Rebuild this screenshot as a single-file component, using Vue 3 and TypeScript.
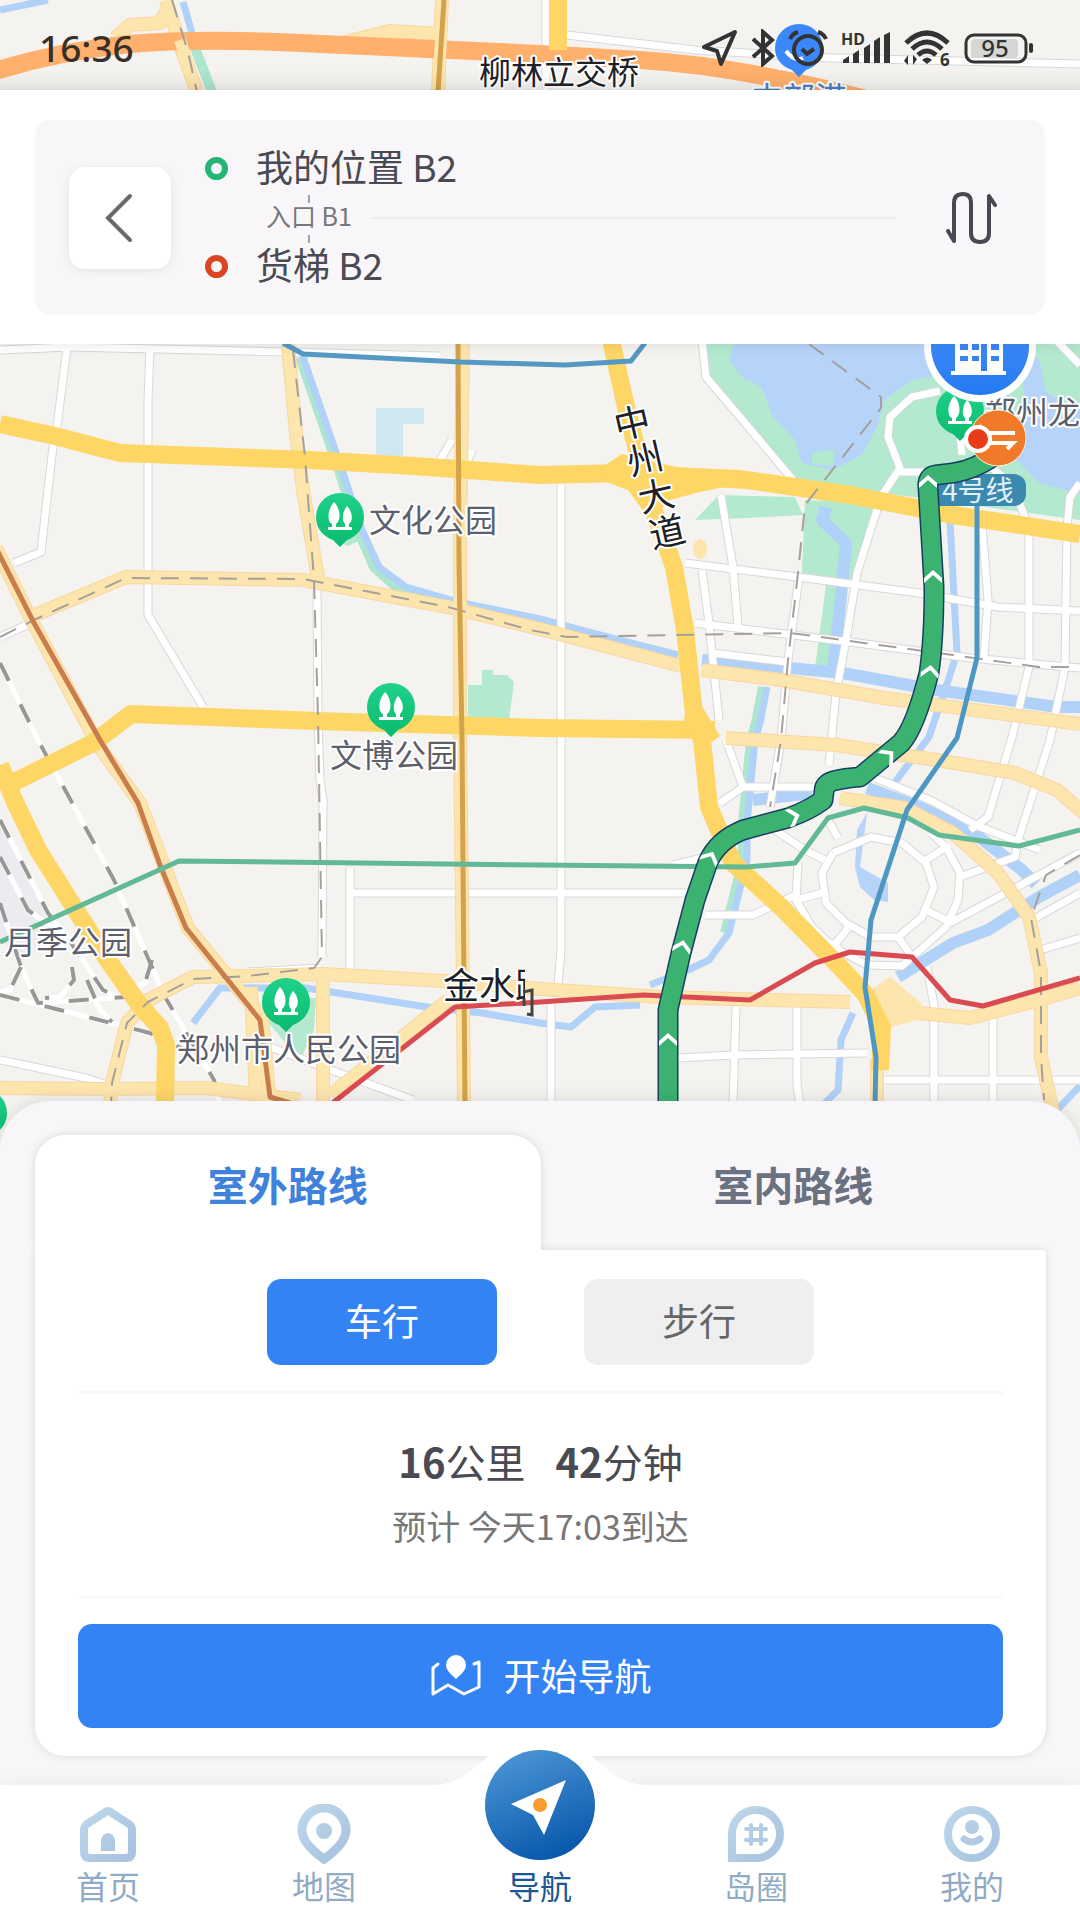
<script setup lang="ts">
import { ref } from 'vue'

type RouteKind = 'outdoor' | 'indoor'
type TravelMode = 'drive' | 'walk'

const routeKind = ref<RouteKind>('outdoor')
const travelMode = ref<TravelMode>('drive')

const routeKinds: { id: RouteKind; label: string }[] = [
  { id: 'outdoor', label: '室外路线' },
  { id: 'indoor', label: '室内路线' },
]
const travelModes: { id: TravelMode; label: string }[] = [
  { id: 'drive', label: '车行' },
  { id: 'walk', label: '步行' },
]

// Map geometry, in map units
const greenAreas: string[] = [
  '702,340 1080,340 1080,520 790,480 708,378',
  '805,500 802,573 853,580 867,527 874,503',
  '826,585 815,668 836,668 846,585',
  '695,520 719,495 795,497 803,515 747,518',
  '468,685 482,685 482,670 493,670 493,675 507,675 514,682 509,720 468,718',
  '262,995 316,998 314,1030 302,1056 286,1044 268,1022',
  '365,538 348,546 335,540 350,500',
]
const waterAreas: string[] = [
  '735,340 729,360 747,383 767,410 795,440 802,463 833,470 862,455 878,425 885,400 912,380 940,375 940,340',
  '1022,340 1040,362 1046,392 1080,410 1080,494 1039,483 1012,455 1024,400',
  '867,813 860,867 888,883 888,902 874,900 860,887 855,867 857,830',
]
const lakeGreens: string[] = [
  '812,452 835,450 833,466 812,464',
  '745,378 762,388 774,420 754,404',
]
const riverBanks: string[] = [
  '300,357 338,467 358,530 374,567 402,592 458,608 540,625 592,638 640,648',
  '195,48 212,92',
  '763,687 756,723 751,740 743,823 743,860 725,933',
]
const rivers: string[] = [
  '0,10 48,0',
  '183,2 192,33',
  '303,357 341,467 362,530 379,567 406,587 458,602 540,619 592,633 678,655',
  '767,687 760,723 755,740 747,823 747,860 729,933 709,960 688,970 650,985',
  '853,1013 841,1040 838,1090 825,1103',
  '193,1023 220,988 306,988 427,1007 482,1013 540,1023 571,1027 595,1007 640,1005',
  '950,520 957,653 946,687 929,737 895,782',
  '1080,1086 1055,1112',
]
const wideRivers: string[] = [
  '826,507 822,520 846,543 840,607 833,668',
  '702,660 843,673 936,690 1057,707 1080,707',
  '753,800 812,793',
  '867,788 919,807 970,830 1022,870 1036,884',
  '1080,875 1039,897 988,930 953,943 898,977',
]
const streets: string[] = [
  '0,350 69,347 286,352 440,356',
  '67,347 57,427 53,447 46,507 41,552 14,563',
  '150,348 148,400 148,615 203,707',
  '317,590 318,717 320,780 323,800 322,957',
  '561,485 561,950 558,985',
  '551,1005 551,1105',
  '350,868 350,972',
  '350,893 690,893',
  '0,637 27,625',
  '567,35 695,50 832,58 1080,64',
  '546,0 546,100',
  '702,340 706,377 740,417 793,480',
  '940,391 912,397 890,417 888,437 900,468 881,497 857,573 846,640 836,693 829,765',
  '900,472 925,472',
  '721,495 733,567 738,627',
  '685,563 798,577 919,593 998,607 1080,611',
  '695,623 850,642 970,658 1080,668',
  '702,570 709,623 719,720',
  '799,577 788,660 781,740 770,807',
  '712,653 788,662',
  '1029,527 1029,667 1012,737 988,817 970,830',
  '1080,483 1070,497 1067,527 1065,667 1050,740 1019,837 1015,857 960,877',
  '981,513 988,600 984,657',
  '985,462 1012,485 1027,522',
  '1056,340 1080,365',
  '957,405 962,455',
  '833,853 871,837 902,843 926,863 934,887 922,917 898,937 871,937 846,923 826,903 822,873 833,853',
  '760,820 805,850 825,860',
  '798,863 796,900 812,927 833,947 867,965 902,966 946,927 958,900 960,873 946,847 930,832',
  '796,900 822,893',
  '922,908 950,922',
  '833,947 848,928',
  '898,937 912,957',
  '926,860 950,845',
  '828,820 838,838',
  '950,923 1080,853',
  '726,740 743,787 815,787',
  '743,787 720,803',
  '673,865 715,855',
  '705,915 753,915 796,895',
  '780,910 840,950',
  '875,778 930,800 978,826 1040,850',
  '1032,920 1080,893',
  '1040,950 1080,938',
  '736,1007 733,1105',
  '797,1007 797,1085 800,1105',
  '678,1058 733,1055 867,1053',
  '884,1080 1080,1080',
  '927,967 934,1005 934,1105',
  '993,1015 993,1105',
  '0,1060 86,1078 130,1092',
  '265,1045 320,1066 413,1100',
  '248,972 320,968',
  '452,440 440,460',
  '472,450 462,475',
]
const secondaryRoads: string[] = [
  '288,345 296,433 303,490 318,578',
  '30,617 126,577 303,580 448,607 540,629 609,647 681,666',
  '702,670 781,680 884,698 1080,724',
  '463,340 460,540 460,740 462,900 464,1105',
  '-4,548 34,625 98,745 140,803 188,928 262,1018 270,1105',
  '166,0 180,45 197,92',
  '115,38 130,25 160,23 170,5',
  '345,42 390,31 440,34',
  '442,0 438,92',
  '110,1105 112,1083 127,1023 148,1000 193,977 248,976 323,974 444,981 540,989 660,997 850,1002',
  '0,1088 110,1089 207,1088 300,1100',
  '323,972 323,1105',
  '251,987 256,1100',
  '448,1000 331,1095',
  '840,798 905,808 953,833 998,873 1029,917 1041,973 1041,1057 1053,1112',
  '726,738 836,745 936,760 1015,773 1057,790 1085,814',
  '884,1008 919,1013 970,1018 1039,1000 1080,988',
  '877,1060 877,1105',
]
const mainRoads: string[] = [
  '0,424 55,436 120,453 310,460 413,466 540,475 623,473 747,480 850,495 953,515 1080,534',
  '0,789 93,743 131,714 317,721 540,728 715,730',
  '0,765 14,800 38,850 103,953 138,1003 160,1028 166,1045 165,1105',
  '611,340 626,407 650,500 674,567 685,630 695,723 702,740 709,807 733,863 781,907 840,967 866,995 882,1028 880,1070',
  '558,0 558,50',
]
const dashedBorders: string[] = [
  '172,0 188,52 197,92',
  '293,350 305,457 314,580 318,717 322,957 314,968 248,976 193,979 148,1002 127,1023 112,1083 111,1105',
  '0,637 34,620 126,578 303,579 448,607 530,630 567,637 791,633 953,655 1039,667 1080,667',
  '809,344 881,397 881,408 805,505 798,573 788,660 781,740 770,807',
  '1080,855 1046,875 1031,918 1041,973 1041,1057 1044,1100',
]
const railways: string[] = [
  '0,663 38,740 114,880 165,997 214,1080 220,1105',
  '0,820 48,913 69,940 103,990 120,998',
  '0,857 28,910 56,930',
  '0,903 21,967 38,1003 127,997',
  '0,995 72,1013 150,1033 185,1050',
  '152,960 145,983 130,990',
  '72,967 74,980 60,997 45,998',
  '21,967 10,990 0,992',
  '87,980 100,1010 112,1022',
]

interface MetroLine {
  color: string
  points: string
}
const metroLines: MetroLine[] = [
  { color: '#d5a24c', points: '444,0 438,92' },
  { color: '#d5a24c', points: '458,340 459,560 462,740 465,1105' },
  { color: '#c97d4c', points: '-4,548 34,623 100,740 138,803 160,865 186,928 260,1020 270,1097 290,1103' },
  { color: '#5499c4', points: '283,343 303,354 460,362 565,365 631,361 645,343' },
  { color: '#61b995', points: '0,942 179,861 540,865 747,867 795,863 828,818 864,808 908,818 939,835 1019,846 1080,830' },
  { color: '#d94b50', points: '330,1105 455,1007 540,1002 643,995 750,1000 815,963 850,952 912,957 950,1000 983,1006 1080,978' },
  { color: '#4d97c2', points: '977,500 977,658 957,738 907,810 871,920 865,987 876,1057 875,1105' },
]

const routePath =
  'M1000 452 Q975 470 953 473 L936 475 Q927 476 928 487 L934 587 Q934 640 929 673 Q915 728 901 743 L860 777 Q845 778 833 781 Q824 784 824 792 L823 800 Q810 810 788 818 L743 830 Q718 840 708 862 L695 900 L681 953 L668 1010 L668 1110'

const chevrons: { x: number; y: number; angle: number }[] = [
  { x: 928, y: 482, angle: 0 },
  { x: 933, y: 577, angle: 0 },
  { x: 930, y: 672, angle: 6 },
  { x: 888, y: 756, angle: 50 },
  { x: 793, y: 817, angle: 72 },
  { x: 710, y: 858, angle: 26 },
  { x: 682, y: 947, angle: 12 },
  { x: 668, y: 1040, angle: 0 },
]

const parkPins: { x: number; y: number }[] = [
  { x: 340, y: 517 },
  { x: 391, y: 707 },
  { x: 286, y: 1002 },
  { x: 960, y: 411 },
  { x: -17, y: 1113 },
]
const parkLabels: { text: string; x: number; y: number }[] = [
  { text: '文化公园', x: 369, y: 532 },
  { text: '文博公园', x: 330, y: 767 },
  { text: '月季公园', x: 4, y: 954 },
  { text: '郑州市人民公园', x: 177, y: 1061 },
  { text: '郑州龙', x: 984, y: 424 },
]
const avenueLabel: { char: string; x: number; y: number }[] = [
  { char: '中', x: 632, y: 423 },
  { char: '州', x: 645, y: 459 },
  { char: '大', x: 656, y: 496 },
  { char: '道', x: 667, y: 532 },
]
</script>

<template>
  <div class="screen">
    <svg class="map" viewBox="0 0 1080 1180" preserveAspectRatio="xMidYMin slice" aria-label="路线地图">
      <defs>
        <clipPath id="road-name-edge"><rect x="440" y="960" width="85" height="60" /></clipPath>
        <linearGradient id="pin-green" x1="0" y1="0" x2="0" y2="1">
          <stop offset="0" stop-color="#1fd18a" />
          <stop offset="1" stop-color="#0abb6e" />
        </linearGradient>
        <linearGradient id="building-blue" x1="0" y1="0" x2="0" y2="1">
          <stop offset="0" stop-color="#4f96fb" />
          <stop offset="1" stop-color="#2479f2" />
        </linearGradient>
      </defs>

      <rect class="land" width="1080" height="1180" />
      <polygon class="station" points="0,820 60,940 20,960 0,940" />
      <polygon v-for="p in greenAreas" :key="p" class="green" :points="p" />
      <polygon v-for="p in waterAreas" :key="p" class="water" :points="p" />
      <polygon v-for="p in lakeGreens" :key="p" class="green" :points="p" />
      <polygon class="campus" points="376,408 424,408 424,424 403,424 403,456 376,456" />
      <polyline v-for="p in riverBanks" :key="p" class="bank" :points="p" />
      <polyline v-for="p in rivers" :key="p" class="river" :points="p" />
      <polyline v-for="p in wideRivers" :key="p" class="river wide" :points="p" />

      <polyline v-for="p in streets" :key="'c' + p" class="street-case" :points="p" />
      <polyline v-for="p in streets" :key="p" class="street" :points="p" />
      <polyline v-for="p in railways" :key="'c' + p" class="rail-case" :points="p" />
      <polyline v-for="p in railways" :key="p" class="rail" :points="p" />
      <polyline v-for="p in secondaryRoads" :key="'c' + p" class="secondary-case" :points="p" />
      <polyline v-for="p in secondaryRoads" :key="p" class="secondary" :points="p" />
      <polygon class="junction" points="868,992 890,977 922,1004 918,1020 888,1028" />
      <ellipse class="junction" cx="700" cy="549" rx="7" ry="10" />
      <path class="motorway" d="M-5 71 Q60 51 130 44 Q200 38 300 43 L540 54 L640 60 Q740 66 870 100" />
      <polyline v-for="p in mainRoads" :key="p" class="main-road" :points="p" />
      <polygon class="main-fill" points="604,466 622,454 680,468 740,470 748,482 700,492 670,500 650,520 628,490 606,482" />
      <polygon class="main-fill" points="684,718 692,690 720,736 712,742 690,738" />
      <polyline class="secondary" points="442,22 438,92" />
      <polyline class="secondary" points="180,40 188,65" />
      <polyline v-for="p in dashedBorders" :key="p" class="border" :points="p" />
      <polyline v-for="m in metroLines" :key="m.points" class="metro" :points="m.points" :stroke="m.color" />

      <g v-for="pin in parkPins" :key="pin.x" :transform="`translate(${pin.x} ${pin.y})`">
        <path d="M-24 0 A24 24 0 1 1 24 0 C24 13 15 20 7 23 L0 30 L-7 23 C-15 20 -24 13 -24 0 Z" fill="url(#pin-green)" />
        <path
          d="M-6 -15 C-13 -7 -13 5 -8 7 V10 H-12 V13 H12 V10 H9 V7 C14 3 12 -6 7 -11 C3 -6 1 3 5 7 V10 H-4 V7 C1 4 1 -8 -6 -15 Z"
          fill="#fff"
        />
      </g>

      <g class="park-label">
        <text v-for="l in parkLabels" :key="l.text" :x="l.x" :y="l.y">{{ l.text }}</text>
      </g>
      <g class="avenue-label">
        <text
          v-for="c in avenueLabel"
          :key="c.char"
          :transform="`translate(${c.x} ${c.y}) rotate(-13)`"
          y="13"
          text-anchor="middle"
        >{{ c.char }}</text>
        <text x="443" y="999" clip-path="url(#road-name-edge)">金水路</text>
      </g>
      <path d="M523 992 L532 990 V1015 L527 1014 M524 998 V1006" fill="none" stroke="#444" stroke-width="3" />
      <text class="bridge-label" x="479" y="84">柳林立交桥</text>

      <g transform="translate(799 48)">
        <path d="M-24 0 A24 24 0 1 1 24 0 C24 13 15 19 7 22 L0 29 L-7 22 C-15 19 -24 13 -24 0 Z" fill="#3c87fa" />
        <path d="M-13 3 Q-5 14 4 10" fill="none" stroke="#fff" stroke-width="4" />
      </g>
      <text class="district-label" x="799" y="110" text-anchor="middle">中部港</text>

      <g>
        <rect x="925" y="474" width="101" height="32" rx="12" fill="#3a89af" />
        <text class="line-label" x="942" y="501">4号线</text>
      </g>

      <path class="route-case" :d="routePath" />
      <path class="route" :d="routePath" />
      <path
        v-for="c in chevrons"
        :key="c.y"
        :transform="`translate(${c.x} ${c.y}) rotate(${c.angle})`"
        d="M-9 1 L0 -7 L9 1 V6 L0 -2 L-9 6 Z"
        fill="#fff"
      />

      <circle cx="980" cy="346" r="56" fill="#fff" />
      <circle cx="980" cy="346" r="49" fill="url(#building-blue)" />
      <path
        d="M955 330 H981 V371 H987 V330 H1003 V371 H1006 V375 H951 V371 H955 Z M960 344 V350 H968 V344 Z M972 344 V350 H979 V344 Z M960 356 V361 H968 V356 Z M972 356 V361 H979 V356 Z M991 344 V350 H999 V344 Z M991 356 V361 H999 V356 Z"
        fill="#fff"
        fill-rule="evenodd"
      />
      <circle cx="998" cy="438" r="28" fill="#f07a29" stroke="#fff5e8" stroke-width="1" />
      <path d="M984 433 H1015 M984 443 H1013 L1007 449" fill="none" stroke="#fff" stroke-width="4" />
      <path d="M965 436 L981 424 L983 431 Z" fill="#fff" />
      <circle cx="978" cy="439" r="14" fill="#fff" />
      <circle cx="978" cy="439" r="10" fill="#e83b17" />
    </svg>

    <div class="status">
      <time>16:36</time>
      <div class="status-icons">
        <svg width="36" height="38" viewBox="0 0 36 38">
          <path d="M33 3 L19 35 L15 22 L2 18 Z" class="line" stroke-width="4" stroke-linejoin="round" />
        </svg>
        <svg width="24" height="38" viewBox="0 0 24 38">
          <path d="M2 10 L21 27 L12 35 V3 L21 11 L2 28" class="line" stroke-width="4" />
        </svg>
        <svg width="40" height="38" viewBox="0 0 40 38">
          <circle cx="20" cy="21" r="14" class="line" stroke-width="4" />
          <path d="M14 20 L19 25 L26 20 M2 10 Q4 5 10 3 M30 3 Q36 5 38 10" class="line" stroke-width="4" />
        </svg>
        <svg width="50" height="38" viewBox="0 0 50 38">
          <text x="0" y="16" class="hd">HD</text>
          <path d="M2 34 V31 L8 27 V34 Z M12 25 L18 21 V34 H12 Z M23 19 L29 15 V34 H23 Z M33 12 L39 8 V34 H33 Z M43 6 L49 3 V34 H43 Z" />
        </svg>
        <svg width="47" height="38" viewBox="0 0 47 38">
          <path d="M2 14 Q23 -6 44 14 M8 20 Q23 6 38 20 M14 26 Q23 18 32 26" class="line" stroke-width="5" />
          <path d="M18 31 Q23 26 28 31 L23 35 Z M4 26 V36 L0 32 M9 36 V26 L13 30" />
          <text x="36" y="37" class="wifi-gen">6</text>
        </svg>
        <svg width="70" height="38" viewBox="0 0 70 38">
          <rect x="2" y="6" width="60" height="27" rx="8" class="line" stroke-width="3" />
          <rect x="7" y="10" width="47" height="19" rx="4" class="charge" />
          <rect x="65" y="14" width="4" height="10" rx="2" />
          <text x="31" y="28" text-anchor="middle" class="percent">95</text>
        </svg>
      </div>
    </div>

    <header class="header">
      <div class="trip">
        <button class="back" type="button" aria-label="返回">
          <svg width="30" height="50" viewBox="0 0 30 50">
            <path d="M25 3 L3 25 L25 47" fill="none" stroke="#696969" stroke-width="4" stroke-linecap="round" />
          </svg>
        </button>
        <div class="stops">
          <div class="stop"><i class="ring from"></i><span>我的位置 B2</span></div>
          <div class="via"><span>入口 B1</span><i class="rule"></i></div>
          <div class="stop"><i class="ring to"></i><span>货梯 B2</span></div>
        </div>
        <button class="swap" type="button" aria-label="交换起点和终点">
          <svg width="54" height="56" viewBox="0 0 54 56">
            <path
              d="M4 41 L10 51 V13 Q10 4 19 4 Q27 4 27 13 V43 Q27 52 36 52 Q45 52 45 43 V6 L51 15"
              fill="none"
              stroke="#484852"
              stroke-width="4"
              stroke-linecap="round"
              stroke-linejoin="round"
            />
          </svg>
        </button>
      </div>
    </header>

    <div class="map-window"></div>

    <main class="sheet">
      <div class="tabs" role="tablist">
        <button
          v-for="k in routeKinds"
          :key="k.id"
          class="tab"
          :class="{ active: routeKind === k.id }"
          type="button"
          role="tab"
          :aria-selected="routeKind === k.id"
          @click="routeKind = k.id"
        >{{ k.label }}</button>
      </div>
      <section class="card">
        <div class="modes">
          <button
            v-for="m in travelModes"
            :key="m.id"
            class="mode"
            :class="{ active: travelMode === m.id }"
            type="button"
            @click="travelMode = m.id"
          >{{ m.label }}</button>
        </div>
        <div class="summary">
          <p class="total"><span><b>16</b>公里</span><span><b>42</b>分钟</span></p>
          <p class="eta">预计 今天17:03到达</p>
        </div>
        <button class="start" type="button">
          <svg width="52" height="44" viewBox="0 0 52 44">
            <path
              d="M8 10 L3 14 V40 L18 31 L34 40 L49 33 V8 L44 10"
              fill="none"
              stroke="#fff"
              stroke-width="3"
              stroke-linecap="round"
              stroke-linejoin="round"
            />
            <path d="M26 25 C19 19 16 15 16 11 A10 10 0 0 1 36 11 C36 15 33 19 26 25 Z" fill="#fff" />
          </svg>
          <span>开始导航</span>
        </button>
      </section>
    </main>

    <nav class="tabbar">
      <svg class="bump" width="220" height="48" viewBox="0 0 220 48">
        <path d="M0 48 V46 C30 46 42 31 57 18 C72 5 90 0 110 0 C130 0 148 5 163 18 C178 31 190 46 220 46 V48 Z" fill="#fff" />
      </svg>
      <a href="#home">
        <svg class="icon" width="60" height="60" viewBox="0 0 60 60">
          <defs>
            <linearGradient id="soft" x1="0" y1="0" x2="60" y2="60" gradientUnits="userSpaceOnUse">
              <stop offset="0" stop-color="#bfdaeb" />
              <stop offset="1" stop-color="#a5bfdf" />
            </linearGradient>
          </defs>
          <path d="M30 7 Q32 7 34 9 L51 20 Q54 22 54 26 V48 Q54 54 48 54 H12 Q6 54 6 48 V26 Q6 22 9 20 L26 9 Q28 7 30 7 Z" fill="none" stroke="url(#soft)" stroke-width="8" />
          <path d="M23 47 V36 Q25 29 30 29 Q35 29 37 36 V47 Z" fill="url(#soft)" />
        </svg>
        <span>首页</span>
      </a>
      <a href="#map">
        <svg class="icon" width="60" height="60" viewBox="0 0 60 60">
          <path d="M30 55 C20 48 8 37 8 26 A22 22 0 0 1 52 26 C52 37 40 48 30 55 Z" fill="none" stroke="url(#soft)" stroke-width="9" />
          <circle cx="30" cy="27" r="8" fill="url(#soft)" />
        </svg>
        <span>地图</span>
      </a>
      <a href="#navigate" class="current" aria-current="page">
        <svg class="compass" width="110" height="110" viewBox="0 0 110 110">
          <defs>
            <linearGradient id="deep" x1="0.3" y1="0" x2="0.7" y2="1">
              <stop offset="0" stop-color="#4a94d4" />
              <stop offset="1" stop-color="#0655aa" />
            </linearGradient>
          </defs>
          <circle cx="55" cy="55" r="55" fill="url(#deep)" />
          <path d="M81 30 L59 85 L48 65 L26 54 Z" fill="#fff" />
          <circle cx="55" cy="55" r="7" fill="#f99c2d" />
        </svg>
        <span>导航</span>
      </a>
      <a href="#circle">
        <svg class="icon" width="60" height="60" viewBox="0 0 60 60">
          <path d="M6 54 V30 A24 24 0 1 1 30 54 Z" fill="none" stroke="url(#soft)" stroke-width="8" />
          <path d="M25 21 V40 M35 21 V40 M20 25 H40 M20 36 H40" fill="none" stroke="url(#soft)" stroke-width="4" stroke-linecap="round" />
        </svg>
        <span>岛圈</span>
      </a>
      <a href="#me">
        <svg class="icon" width="60" height="60" viewBox="0 0 60 60">
          <circle cx="30" cy="30" r="24" fill="none" stroke="url(#soft)" stroke-width="8" />
          <circle cx="30" cy="23" r="7" fill="url(#soft)" />
          <path d="M22 35 Q30 41 38 35" fill="none" stroke="url(#soft)" stroke-width="7" stroke-linecap="round" />
        </svg>
        <span>我的</span>
      </a>
    </nav>
  </div>
</template>

<style>
body {
  background: #f8f6f8;
}
</style>

<style scoped>
.screen {
  position: relative;
  display: flex;
  flex-direction: column;
  min-height: 100vh;
  overflow: hidden;
  font-family: 'Noto Sans CJK SC', 'Noto Sans', sans-serif;
  color: #4a4a52;
}

button {
  margin: 0;
  padding: 0;
  border: 0;
  background: none;
  font: inherit;
  color: inherit;
  cursor: pointer;
}

p {
  margin: 0;
}

svg {
  display: block;
  flex: none;
}

/* Map */
.map {
  position: absolute;
  top: 0;
  left: 0;
  width: 100%;
  height: calc(100% - 740px);
}
.map polyline,
.map .motorway,
.map .route,
.map .route-case {
  fill: none;
  stroke-linejoin: round;
}
.land { fill: #f4f3f0; }
.station { fill: #ecebf0; }
.green { fill: #b2e9cf; }
.water { fill: #b6d3f9; }
.campus { fill: #d0e7f1; }
.bank { stroke: #aee5cf; stroke-width: 10; }
.river { stroke: #b0d1f8; stroke-width: 7; }
.river.wide { stroke-width: 12; }
.street-case { stroke: #d9d7db; stroke-width: 9; }
.street { stroke: #fff; stroke-width: 7; }
.rail-case { stroke: #fff; stroke-width: 5; }
.rail { stroke: #979795; stroke-width: 4; stroke-dasharray: 20 26; }
.secondary-case { stroke: #fbd6a0; stroke-width: 14; }
.secondary { stroke: #fde5ae; stroke-width: 12; }
.junction { fill: #fde5ae; }
.motorway { stroke: #ffb06c; stroke-width: 18; }
.main-road { stroke: #fdd666; stroke-width: 18; }
.main-fill { fill: #fdd666; }
.border { stroke: #a5a09c; stroke-width: 2; stroke-dasharray: 18 11; }
.metro { stroke-width: 5; }
.route-case { stroke: #173f63; stroke-width: 21; }
.route { stroke: #3cb271; stroke-width: 18; }
.map text {
  paint-order: stroke;
  stroke: #fff;
  stroke-width: 4px;
  stroke-linejoin: round;
}
.park-label { font-size: 32px; fill: #5c606d; }
.avenue-label { font-size: 36px; fill: #202027; }
.bridge-label { font-size: 32px; fill: #202027; }
.district-label { font-size: 32px; fill: #4f7fc4; }
.map .line-label { font-size: 28px; fill: #e2f1f8; stroke: none; }

/* Status bar */
.status {
  position: relative;
  display: flex;
  align-items: center;
  justify-content: space-between;
  box-sizing: border-box;
  height: 90px;
  padding: 5px 46px 0 39px;
  background: linear-gradient(rgba(0, 0, 0, 0) 70px, rgba(0, 0, 0, 0.06));
}
.status time {
  font-family: 'Noto Sans', sans-serif;
  font-size: 37px;
  font-weight: 500;
  color: #37302a;
}
.status-icons {
  display: flex;
  align-items: center;
  gap: 13px;
  fill: #333;
}
.line { fill: none; stroke: #333; }
.charge { fill: #d6d6d6; }
.hd { font: bold 16px 'Noto Sans', sans-serif; }
.wifi-gen { font: bold 17px 'Noto Sans', sans-serif; }
.percent { font: 500 24px 'Noto Sans', sans-serif; }

/* Trip header */
.header {
  position: relative;
  padding: 30px 35px 29px;
  background: #fff;
  box-shadow: 0 2px 12px rgba(0, 0, 0, 0.08);
}
.trip {
  display: flex;
  align-items: center;
  box-sizing: border-box;
  height: 195px;
  padding: 0 47px 0 34px;
  border-radius: 16px;
  background: #f8f6f8;
}
.back {
  display: grid;
  place-items: center;
  flex: none;
  width: 102px;
  height: 102px;
  border-radius: 16px;
  background: #fff;
  box-shadow: 0 2px 12px rgba(0, 0, 0, 0.08);
}
.stops {
  flex: 1;
  padding-left: 34px;
}
.stop {
  display: flex;
  align-items: center;
  gap: 28px;
  height: 54px;
  font-size: 37px;
  line-height: 54px;
}
.stop span {
  padding-bottom: 6px;
}
.ring {
  box-sizing: border-box;
  width: 23px;
  height: 23px;
  border: 6px solid #22b573;
  border-radius: 50%;
}
.ring.to {
  border-color: #dc4522;
}
.via {
  display: flex;
  align-items: center;
  gap: 20px;
  height: 44px;
  padding-left: 61px;
  font-size: 25px;
  line-height: 44px;
  color: #77777b;
}
.via span {
  position: relative;
  padding-bottom: 6px;
}
.via span::before,
.via span::after {
  content: '';
  position: absolute;
  left: 42px;
  width: 2px;
  height: 8px;
  background: #a2a2a6;
}
.via span::before { top: 2px; }
.via span::after { bottom: 0; }
.rule {
  flex: 1;
  height: 2px;
  margin-right: 48px;
  background: #eeecee;
}
.swap {
  flex: none;
}

.map-window {
  flex: 1 0 400px;
}

/* Bottom sheet */
.sheet {
  position: relative;
  padding: 34px 34px 29px 35px;
  border-radius: 50px 50px 0 0;
  background: #f8f6f8;
  box-shadow: 0 -2px 16px rgba(0, 0, 0, 0.1);
}
.tabs {
  display: flex;
}
.tab {
  flex: 1;
  height: 115px;
  padding-bottom: 17px;
  border-radius: 30px 30px 0 0;
  font-size: 40px;
  font-weight: 700;
  color: #6a7180;
}
.tab.active {
  background: #fff;
  color: #3f82dc;
  box-shadow: 0 0 10px rgba(0, 0, 0, 0.12);
}
.card {
  position: relative;
  padding: 29px 43px 28px;
  border-radius: 0 4px 30px 30px;
  background: #fff;
  box-shadow: 0 0 10px rgba(0, 0, 0, 0.12);
  clip-path: polygon(-20px 0, 50% 0, 50% -20px, calc(100% + 20px) -20px, calc(100% + 20px) calc(100% + 20px), -20px calc(100% + 20px));
}
.modes {
  display: flex;
  justify-content: center;
  gap: 87px;
  padding-bottom: 26px;
  border-bottom: 3px solid #f8f8f8;
}
.mode {
  width: 230px;
  height: 86px;
  padding-bottom: 5px;
  border-radius: 14px;
  background: #efefef;
  font-size: 37px;
  color: #666;
}
.mode.active {
  background: #3383f4;
  color: #fff;
}
.summary {
  display: flex;
  flex-direction: column;
  align-items: center;
  gap: 8px;
  padding: 37px 0 43px;
  border-bottom: 2px solid #f8f8f8;
}
.total {
  display: flex;
  gap: 30px;
  font-size: 40px;
  line-height: 60px;
}
.eta {
  font-size: 34px;
  line-height: 54px;
  color: #777;
}
.start {
  display: flex;
  align-items: center;
  justify-content: center;
  gap: 22px;
  width: 100%;
  height: 104px;
  margin-top: 26px;
  border-radius: 14px;
  background: #3383f4;
  font-size: 37px;
  color: #fff;
}
.start span {
  padding-bottom: 3px;
}

/* Tab bar */
.tabbar {
  position: relative;
  display: flex;
  height: 135px;
  background: #fff;
  box-shadow: 0 -2px 16px rgba(0, 0, 0, 0.05);
}
.bump {
  position: absolute;
  bottom: calc(100% - 2px);
  left: 50%;
  transform: translateX(-50%);
}
.tabbar a {
  position: relative;
  display: flex;
  flex: 1;
  flex-direction: column;
  align-items: center;
  justify-content: flex-end;
  padding-bottom: 12px;
  font-size: 32px;
  line-height: 46px;
  color: #8fabc5;
  text-decoration: none;
}
.tabbar .current {
  color: #1c5793;
}
.icon {
  margin-bottom: -2px;
}
.compass {
  margin-bottom: 2px;
}
</style>
